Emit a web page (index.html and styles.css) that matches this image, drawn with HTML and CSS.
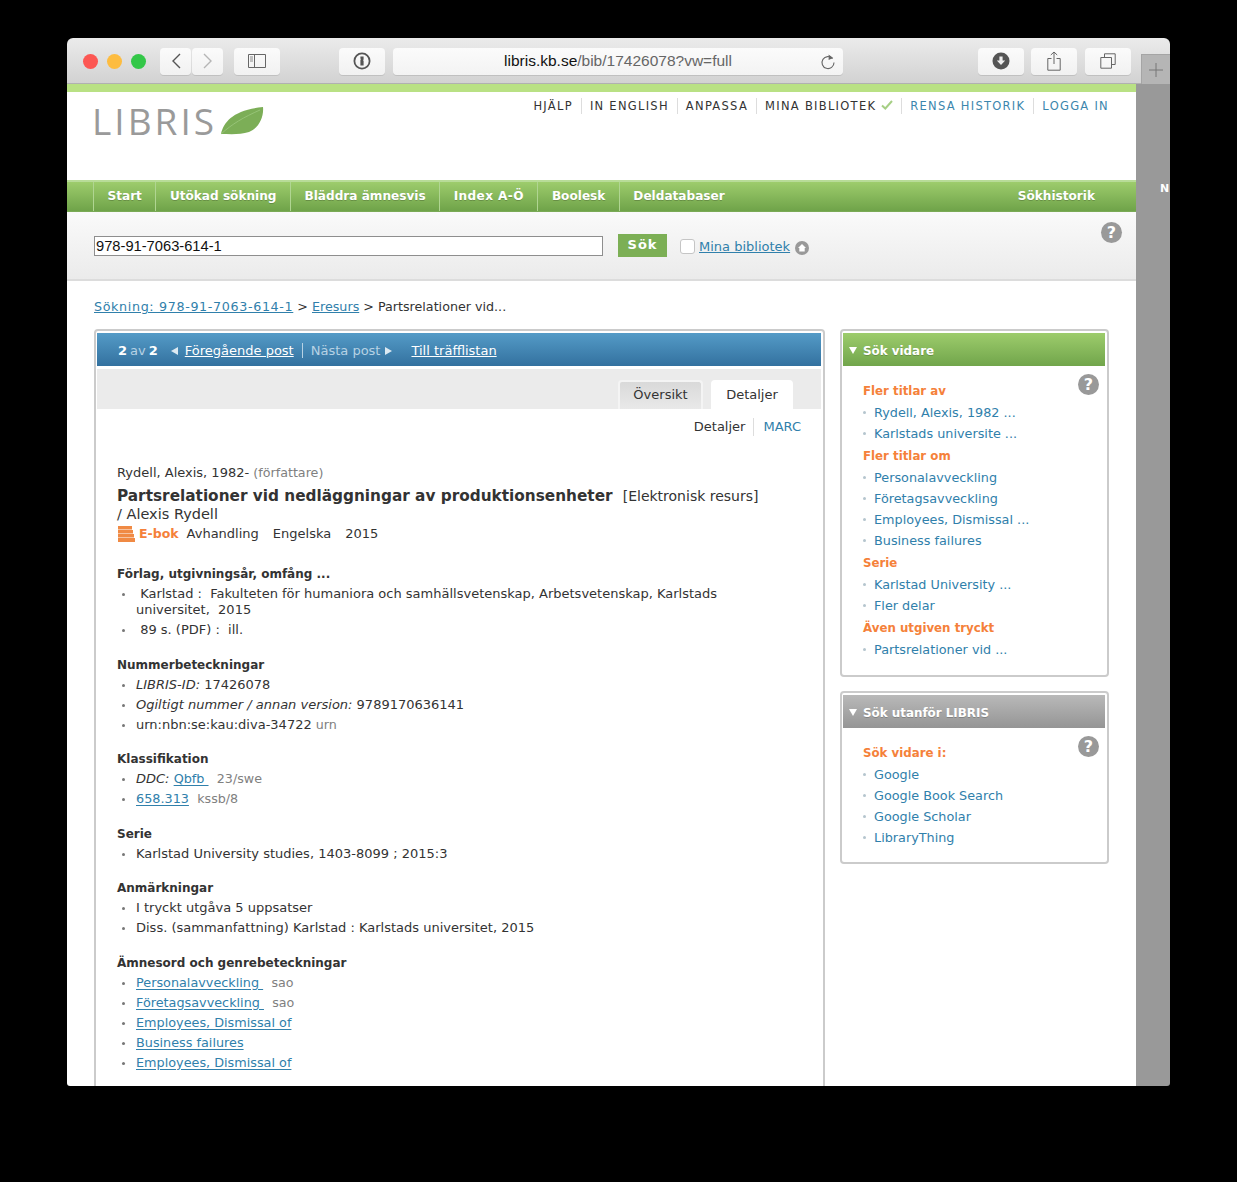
FILE: index.html
```html
<!DOCTYPE html>
<html lang="sv">
<head>
    <title>LIBRIS</title>
    <link rel="stylesheet" href="styles.css">
</head>
<body>
<div class="window">
    <div class="toolbar">
        <span class="light red"></span>
        <span class="light yellow"></span>
        <span class="light green"></span>
        <div class="btn-group">
            <span class="btn btn-nav"><svg width="12" height="18" viewBox="0 0 12 18"><path d="M10 2 3 9l7 7" fill="none" stroke="#555" stroke-width="1.4"/></svg></span>
            <span class="btn btn-nav"><svg width="12" height="18" viewBox="0 0 12 18"><path d="M2 2l7 7-7 7" fill="none" stroke="#b5b5b5" stroke-width="1.4"/></svg></span>
        </div>
        <span class="btn btn-sidebar"><svg width="18" height="14" viewBox="0 0 18 14"><path d="M.5.5h17v13H.5zM6.5.5v13" fill="none" stroke="#666"/><path d="M2 3h3M2 5h3M2 7h3" stroke="#888"/></svg></span>
        <span class="btn btn-info"><svg width="18" height="18" viewBox="0 0 18 18"><circle cx="9" cy="9" r="7.6" fill="none" stroke="#555" stroke-width="1.8"/><path d="M7.4 4.6h3.2v3l-.6.6.6.6v4.6H7.4V7.8l.6-.6-.6-.6z" fill="#555"/></svg></span>
        <div class="url-bar">
            <span class="url"><b>libris.kb.se</b>/bib/17426078?vw=full</span>
            <svg class="reload" width="16" height="18" viewBox="0 0 16 18"><path d="M12.5 5.6A6 6 0 1 0 14 9.500" fill="none" stroke="#666" stroke-width="1.1"/><path d="M8.600 1.400l4.600 3.600-4.600 2z" fill="#666"/></svg>
        </div>
        <span class="btn btn-download"><svg width="18" height="18" viewBox="0 0 18 18"><circle cx="9" cy="9" r="8.500" fill="#555"/><path d="M7.400 4.500h3.200v4h2.600L9 13 4.800 8.500h2.600z" fill="#eee"/></svg></span>
        <span class="btn btn-share"><svg width="14" height="20" viewBox="0 0 14 20"><path d="M4.500 7.500H.8v11.700h12.400V7.500H9.500M7 13V1.200M3.800 4 7 1l3.200 3" fill="none" stroke="#666"/></svg></span>
        <span class="btn btn-tabs"><svg width="16" height="16" viewBox="0 0 16 16"><path d="M4.500 4.500V.8h10.700v10.700h-3.700M.8 4.500h10.700v10.700H.8z" fill="none" stroke="#666"/></svg></span>
        <span class="new-tab"><svg width="14" height="14" viewBox="0 0 14 14"><path d="M7 0v14M0 7h14" stroke="#777"/></svg></span>
    </div>

    <div class="browser-body">
        <div class="page">
            <div class="header">
                <div class="logo">
                    <span class="logo-text">LIBRIS</span>
                    <svg width="44" height="28" viewBox="0 0 44 28"><path d="M1 27C4 14 14 3 43 0c1 10-4 21-14 25-9 3-20 2-28 2z" fill="#7cae57"/><path d="M1 27C12 17 24 10 40 3" fill="none" stroke="#96c377" stroke-width="1"/></svg>
                </div>
                <ul class="top-links">
                    <li>Hjälp</li>
                    <li>In English</li>
                    <li>Anpassa</li>
                    <li>Mina bibliotek <svg class="check" width="12" height="10" viewBox="0 0 12 10"><path d="M1 5.500 4.300 8.500 11 1" fill="none" stroke="#a6cf85" stroke-width="2"/></svg></li>
                    <li class="blue">Rensa historik</li>
                    <li class="blue">Logga in</li>
                </ul>
            </div>

            <div class="nav">
                <a>Start</a>
                <a>Utökad sökning</a>
                <a>Bläddra ämnesvis</a>
                <a class="nav-index">Index A-Ö</a>
                <a>Boolesk</a>
                <a>Deldatabaser</a>
                <span class="nav-right">Sökhistorik</span>
            </div>

            <div class="search">
                <input class="search-input" type="text" value="978-91-7063-614-1">
                <span class="search-btn">Sök</span>
                <span class="checkbox"></span>
                <a class="link">Mina bibliotek</a>
                <svg class="home" width="14" height="14" viewBox="0 0 14 14"><circle cx="7" cy="7" r="7" fill="#999"/><path d="M7 3 3 7h1.300v3.500h5.400V7H11z" fill="#fff"/></svg>
                <span class="help help-search">?</span>
            </div>

            <div class="crumbs"><a class="link crumb-search">Sökning: 978-91-7063-614-1</a> &gt; <a class="link">Eresurs</a> &gt; Partsrelationer vid...</div>

            <div class="columns">
                <div class="main-box">
                    <div class="record-bar">
                        <b>2</b> <span class="dim">av</span> <b>2</b>
                        <span class="arrow-left"></span>
                        <a class="bar-link">Föregående post</a>
                        <span class="bar-sep"></span>
                        <span class="dim">Nästa post</span>
                        <span class="arrow-right"></span>
                        <a class="bar-link bar-last">Till träfflistan</a>
                    </div>
                    <div class="tabs">
                        <span class="tab">Översikt</span>
                        <span class="tab tab-active">Detaljer</span>
                    </div>
                    <div class="views"><span>Detaljer</span><a class="plain-link">MARC</a></div>

                    <div class="record">
                        <div class="author">Rydell, Alexis, 1982- <span class="grey">(författare)</span></div>
                        <div class="title-line"><strong>Partsrelationer vid nedläggningar av produktionsenheter</strong> <span>[Elektronisk resurs]</span></div>
                        <div class="title-by">/ Alexis Rydell</div>
                        <div class="meta">
                            <svg width="17" height="16" viewBox="0 0 17 16"><path d="M0 0h14v3.500H0zM0 4h15v3.500H0zM0 8h16v3.500H0zM0 12h17v4H0z" fill="#f08a44"/></svg>
                            <span class="ebook">E-bok</span><span>Avhandling</span><span>Engelska</span><span>2015</span>
                        </div>

                        <h4>Förlag, utgivningsår, omfång ...</h4>
                        <ul>
                            <li>&nbsp;Karlstad :&nbsp; Fakulteten för humaniora och samhällsvetenskap, Arbetsvetenskap, Karlstads universitet,&nbsp; 2015</li>
                            <li>&nbsp;89 s. (PDF) :&nbsp; ill.</li>
                        </ul>

                        <h4>Nummerbeteckningar</h4>
                        <ul>
                            <li><i>LIBRIS-ID:</i> 17426078</li>
                            <li><i>Ogiltigt nummer / annan version:</i> 9789170636141</li>
                            <li>urn:nbn:se:kau:diva-34722 <span class="grey">urn</span></li>
                        </ul>

                        <h4>Klassifikation</h4>
                        <ul>
                            <li><i>DDC:</i> <a class="link">Qbfb&nbsp;</a>&nbsp; <span class="grey">23/swe</span></li>
                            <li><a class="link">658.313</a>&nbsp; <span class="grey">kssb/8</span></li>
                        </ul>

                        <h4>Serie</h4>
                        <ul>
                            <li>Karlstad University studies, 1403-8099 ; 2015:3</li>
                        </ul>

                        <h4>Anmärkningar</h4>
                        <ul>
                            <li>I tryckt utgåva 5 uppsatser</li>
                            <li>Diss. (sammanfattning) Karlstad : Karlstads universitet, 2015</li>
                        </ul>

                        <h4>Ämnesord och genrebeteckningar</h4>
                        <ul>
                            <li><a class="link">Personalavveckling&nbsp;</a>&nbsp; <span class="grey">sao</span></li>
                            <li><a class="link">Företagsavveckling&nbsp;</a>&nbsp; <span class="grey">sao</span></li>
                            <li><a class="link">Employees, Dismissal of</a></li>
                            <li><a class="link">Business failures</a></li>
                            <li><a class="link">Employees, Dismissal of</a></li>
                        </ul>
                    </div>
                </div>

                <div class="sidebar">
                    <div class="side-box box-vidare">
                        <div class="side-head head-green"><span class="arrow-down"></span>Sök vidare</div>
                        <div class="side-body">
                            <span class="help help-side">?</span>
                            <h5>Fler titlar av</h5>
                            <ul>
                                <li>Rydell, Alexis, 1982 ...</li>
                                <li>Karlstads universite ...</li>
                            </ul>
                            <h5>Fler titlar om</h5>
                            <ul>
                                <li>Personalavveckling</li>
                                <li>Företagsavveckling</li>
                                <li>Employees, Dismissal ...</li>
                                <li>Business failures</li>
                            </ul>
                            <h5>Serie</h5>
                            <ul>
                                <li>Karlstad University ...</li>
                                <li>Fler delar</li>
                            </ul>
                            <h5>Även utgiven tryckt</h5>
                            <ul>
                                <li>Partsrelationer vid ...</li>
                            </ul>
                        </div>
                    </div>
                    <div class="side-box box-utanfor">
                        <div class="side-head head-grey"><span class="arrow-down"></span>Sök utanför LIBRIS</div>
                        <div class="side-body">
                            <span class="help help-side">?</span>
                            <h5>Sök vidare i:</h5>
                            <ul>
                                <li>Google</li>
                                <li>Google Book Search</li>
                                <li>Google Scholar</li>
                                <li>LibraryThing</li>
                            </ul>
                        </div>
                    </div>
                </div>
            </div>
        </div>
        <div class="gutter"><span class="gutter-letter">N</span></div>
    </div>
</div>
</body>
</html>
```

FILE: styles.css
```css
html, body {
    margin: 0;
    height: 1182px;
    background: #000;
    overflow: hidden;
}

body {
    padding: 38px 0 0 67px;
    box-sizing: border-box;
    font-family: "DejaVu Sans", sans-serif;
    font-size: 13px;
    color: #333;
}

ul {
    list-style: none;
    margin: 0;
    padding: 0;
}

.window {
    width: 1103px;
    height: 1048px;
    border-radius: 6px 6px 3px 3px;
    overflow: hidden;
    display: flex;
    flex-direction: column;
}

/* browser toolbar */
.toolbar {
    height: 46px;
    box-sizing: border-box;
    flex: none;
    display: flex;
    align-items: center;
    padding: 1px 0 0 16px;
    background: linear-gradient(#ebebeb, #d2d2d2);
    border-bottom: 1px solid #b1b1b1;
    position: relative;
}

.light {
    width: 15px;
    height: 15px;
    border-radius: 50%;
    margin-right: 9px;
}

.red { background: #fc5753; }
.yellow { background: #fdbc40; }
.green { background: #33c748; }

.btn-group {
    display: flex;
    gap: 1px;
    margin-left: 5px;
}

.btn {
    height: 27px;
    background: linear-gradient(#fbfbfb, #f1f1f1);
    border-radius: 4px;
    box-shadow: 0 1px 0 #c0c0c0;
    display: flex;
    align-items: center;
    justify-content: center;
}

.btn-nav { width: 31px; }
.btn-sidebar { width: 46px; margin-left: 11px; }
.btn-info { width: 46px; margin-left: 59px; }
.btn-download { width: 46px; margin-left: 135px; }
.btn-share { width: 46px; margin-left: 7px; }
.btn-tabs { width: 46px; margin-left: 8px; }

.url-bar {
    width: 450px;
    height: 27px;
    margin-left: 8px;
    background: linear-gradient(#fbfbfb, #f3f3f3);
    border-radius: 4px;
    box-shadow: 0 1px 0 #c0c0c0;
    display: flex;
    align-items: center;
    justify-content: center;
    font-family: "Liberation Sans", sans-serif;
    font-size: 15.5px;
    color: #666;
    position: relative;
}

.url b {
    font-weight: normal;
    color: #111;
}

.reload {
    position: absolute;
    right: 7px;
    top: 5px;
}

.new-tab {
    position: absolute;
    right: 0;
    bottom: -1px;
    width: 29px;
    height: 30px;
    background: #b5b5b5;
    border-left: 1px solid #a5a5a5;
    border-top: 1px solid #a5a5a5;
    box-sizing: border-box;
    display: flex;
    align-items: center;
    justify-content: center;
}

.browser-body {
    flex: 1;
    display: flex;
    min-height: 0;
}

.page {
    width: 1069px;
    flex: none;
    background: #fff;
    overflow: hidden;
}

.gutter {
    flex: 1;
    background: #999;
    overflow: hidden;
    padding: 98px 0 0 24px;
    color: #fff;
    font-weight: bold;
    font-size: 11px;
}

/* site header */
.header {
    height: 88px;
    border-top: 8px solid #b9e184;
    display: flex;
    justify-content: space-between;
    padding: 0 27px;
}

.logo {
    display: flex;
    align-items: flex-start;
    gap: 3px;
    padding-top: 15px;
    margin-left: -2px;
}

.logo-text {
    font-family: "Open Sans", sans-serif;
    font-size: 37px;
    line-height: 28px;
    letter-spacing: 3px;
    color: #9a9a9a;
}

.top-links {
    display: flex;
    padding-top: 6px;
    height: 16px;
    text-transform: uppercase;
    font-size: 11.5px;
    letter-spacing: 1.28px;
}

.top-links li {
    padding: 0 8px;
    border-left: 1px solid #ddd;
    line-height: 16px;
}

.top-links li:first-child { border-left: 0; }
.top-links li:last-child { padding-right: 0; }
.top-links .blue { color: #3b86ad; }

/* green nav */
.nav {
    height: 32px;
    box-sizing: border-box;
    padding-left: 26px;
    display: flex;
    align-items: stretch;
    background: linear-gradient(#9dcc6c, #6fa349);
    border-top: 2px solid #b8dc98;
    border-bottom: 1px solid #7aaa56;
    color: #fff;
    font-weight: bold;
    font-size: 12.1px;
    line-height: 29px;
    text-shadow: 0 1px 0 rgba(0, 0, 0, 0.2);
}

.nav a {
    padding: 0 13.5px;
    border-left: 1px solid #b0d592;
}

.nav .nav-index {
    letter-spacing: 0.4px;
}

.nav-right {
    margin-left: auto;
    margin-right: 41px;
}

/* search band */
.search {
    height: 69px;
    box-sizing: border-box;
    padding: 22px 0 0 27px;
    display: flex;
    align-items: flex-start;
    background: linear-gradient(#fafafa, #ebebeb);
    border-bottom: 2px solid #dcdcdc;
    position: relative;
}

.search-input {
    width: 509px;
    height: 20px;
    box-sizing: border-box;
    margin: 2px 0 0;
    padding: 0 1px;
    border: 1px solid #8e8e8e;
    font-family: "Liberation Sans", sans-serif;
    font-size: 14.7px;
    color: #111;
}

.search-btn {
    width: 49px;
    height: 23px;
    margin-left: 15px;
    background: #7caf55;
    color: #fff;
    font-weight: bold;
    font-size: 13px;
    letter-spacing: 1px;
    line-height: 22px;
    text-align: center;
}

.checkbox {
    width: 13px;
    height: 13px;
    margin: 5px 4px 0 13px;
    background: #fff;
    border: 1px solid #c5c5c5;
    border-radius: 3px;
}

.search .link {
    line-height: 26px;
}

.home {
    margin: 7px 0 0 5px;
}

.help {
    width: 21px;
    height: 21px;
    border-radius: 50%;
    background: #999;
    color: #fff;
    font-weight: bold;
    font-size: 16px;
    line-height: 21px;
    text-align: center;
    position: absolute;
}

.help-search {
    right: 14px;
    top: 10px;
}

.help-side {
    right: 6px;
    top: 5px;
}

.link {
    color: #3080ab;
    text-decoration: underline;
}

/* breadcrumbs */
.crumbs {
    padding: 17px 27px 0;
    height: 31px;
    line-height: 18px;
    font-size: 12.7px;
}

.crumb-search {
    letter-spacing: 0.65px;
}

.columns {
    display: flex;
    align-items: flex-start;
    padding-left: 27px;
    gap: 15px;
}

.main-box {
    width: 731px;
    height: 900px;
    flex: none;
    box-sizing: border-box;
    padding: 2px 2px 2px 1px;
    border: 2px solid #cbcbcb;
    border-radius: 4px;
}

.record-bar {
    height: 33px;
    box-sizing: border-box;
    padding: 2px 0 0 21px;
    display: flex;
    align-items: center;
    gap: 3px;
    color: #fff;
    background: linear-gradient(#549bc7, #33719f);
}

.dim { color: #b7d2e4; }

.arrow-left, .arrow-right {
    width: 0;
    height: 0;
    border-top: 4px solid transparent;
    border-bottom: 4px solid transparent;
}

.arrow-left {
    margin: 0 4px 0 10px;
    border-right: 7px solid #dce9f2;
}

.arrow-right {
    margin-left: 2px;
    border-left: 7px solid #dce9f2;
}

.bar-link {
    color: #fff;
    text-decoration: underline;
}

.bar-sep {
    width: 1px;
    height: 15px;
    margin: 0 5px;
    background: #b7d2e4;
}

.bar-last { margin-left: 16px; }

.tabs {
    height: 40px;
    box-sizing: border-box;
    margin-top: 3px;
    padding-right: 28px;
    display: flex;
    justify-content: flex-end;
    align-items: flex-end;
    gap: 8px;
    background: #ebebeb;
}

.tab {
    width: 85px;
    height: 29px;
    box-sizing: border-box;
    border: 2px solid #f4f4f4;
    border-bottom: 0;
    border-radius: 4px 4px 0 0;
    background: linear-gradient(#d9d9d9, #e9e9e9);
    text-align: center;
    line-height: 26px;
}

.tab-active {
    width: 82px;
    background: #fff;
    border-color: #fff;
}

.views {
    padding: 9px 20px 0;
    display: flex;
    justify-content: flex-end;
    line-height: 18px;
}

.views .plain-link {
    margin-left: 8px;
    padding-left: 9px;
    border-left: 1px solid #ddd;
    color: #3080ab;
}

.record {
    padding: 27px 20px 0;
    line-height: 20px;
}

.grey {
    color: #808080;
    font-size: 12.7px;
}

.title-line {
    height: 20px;
    padding-top: 3px;
    white-space: nowrap;
}

.title-line strong {
    font-size: 15.3px;
    margin-right: 6px;
}

.title-line span {
    font-size: 14px;
}

.title-by {
    margin-top: -1px;
    font-size: 14.5px;
    line-height: 18px;
}

.meta {
    display: flex;
    align-items: center;
    height: 20px;
    margin: 1px 0 20px;
}

.meta span { margin-right: 14px; }

.meta svg { margin: 0 4px 0 1px; }

.meta .ebook {
    color: #f5813a;
    font-weight: bold;
    font-size: 12.5px;
    margin-right: 8px;
}

.record h4 {
    margin: 14.5px 0 0;
    font-size: 12px;
    line-height: 20px;
}

.record ul {
    padding: 0 45px 0 19px;
}

.record li {
    position: relative;
    line-height: 16px;
    padding: 2px 0;
}

.record li::before {
    content: "";
    position: absolute;
    left: -14px;
    top: 9px;
    width: 3px;
    height: 3px;
    border-radius: 50%;
    background: #777;
}

.record li .link {
    font-size: 12.8px;
    text-underline-offset: 2px;
}

/* sidebar */
.sidebar {
    width: 269px;
    display: flex;
    flex-direction: column;
    gap: 14px;
}

.side-box {
    box-sizing: border-box;
    padding: 2px 2px 0 1px;
    border: 2px solid #cbcbcb;
    border-radius: 4px;
}

.box-vidare { height: 348px; }
.box-utanfor { height: 173px; }

.side-head {
    height: 33px;
    padding: 2px 0 0 6px;
    box-sizing: border-box;
    color: #fff;
    font-weight: bold;
    font-size: 11.9px;
    display: flex;
    align-items: center;
    gap: 6px;
    text-shadow: 0 1px 0 rgba(0, 0, 0, 0.2);
}

.head-green { background: linear-gradient(#9dcc6c, #71a54b); }
.head-grey { background: linear-gradient(#b9b9b9, #959595); }

.arrow-down {
    width: 0;
    height: 0;
    border-left: 4.5px solid transparent;
    border-right: 4.5px solid transparent;
    border-top: 7px solid #fff;
}

.side-body {
    position: relative;
    margin-top: 3px;
    padding: 11px 0 0 20px;
    font-size: 12.8px;
    line-height: 21px;
    color: #3080ab;
}

.side-body h5 {
    margin: 1px 0 0;
    font-size: 11.8px;
    line-height: 22px;
    color: #f5813a;
}

.side-body h5:nth-child(2) {
    margin-top: 0;
}

.side-body li {
    position: relative;
    padding-left: 11px;
}

.side-body li::before {
    content: "";
    position: absolute;
    left: 0;
    top: 9px;
    width: 3px;
    height: 3px;
    border-radius: 50%;
    background: #b5c5ce;
}
```
